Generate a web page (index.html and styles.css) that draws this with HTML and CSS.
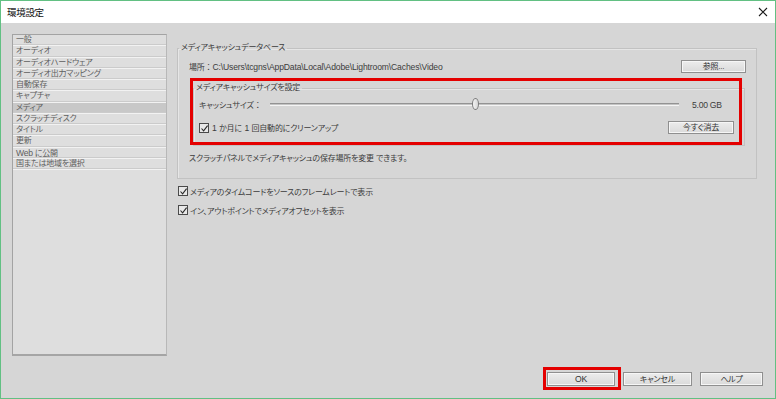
FILE: index.html
```html
<!DOCTYPE html>
<html lang="ja">
<head>
<meta charset="utf-8">
<title>環境設定</title>
<link rel="stylesheet" href="styles.css">
</head>
<body>
<div class="window">
  <div class="titlebar">
    <span class="title">環境設定</span>
    <svg class="close" width="10" height="10" viewBox="0 0 10 10"><path d="M1 1 L9 9 M9 1 L1 9" stroke="#1a1a1a" stroke-width="1.1" fill="none"/></svg>
  </div>
  <div class="body">
    <div class="main">
      <ul class="nav">
        <li>一般</li>
        <li>オーディオ</li>
        <li>オーディオハードウェア</li>
        <li>オーディオ出力マッピング</li>
        <li>自動保存</li>
        <li>キャプチャ</li>
        <li class="selected">メディア</li>
        <li>スクラッチディスク</li>
        <li>タイトル</li>
        <li>更新</li>
        <li><span class="latin">Web</span> に公開</li>
        <li>国または地域を選択</li>
      </ul>
      <div class="panel">
        <fieldset class="group outer">
          <legend>メディアキャッシュデータベース</legend>
          <div class="path-row">
            <span>場所 ： <span class="latin path">C:\Users\tcgns\AppData\Local\Adobe\Lightroom\Caches\Video</span></span>
            <button class="btn btn-browse">参照...</button>
          </div>
          <fieldset class="group inner">
            <legend>メディアキャッシュサイズを設定</legend>
            <div class="slider-row">
              <span class="slider-label">キャッシュサイズ ：</span>
              <div class="track"><span class="thumb" style="left: 50.2%"></span></div>
              <span class="slider-value latin">5.00 GB</span>
            </div>
            <div class="check-row">
              <label class="check spaced"><span class="box"><svg width="9" height="9" viewBox="0 0 9 9"><path d="M1.5 4.5 L3.6 6.8 L7.6 1.6" stroke="#2a2a2a" stroke-width="1.1" fill="none"/></svg></span><span class="latin">1</span> か月に <span class="latin">1</span> 回自動的にクリーンアップ</label>
              <button class="btn btn-clear">今すぐ消去</button>
            </div>
          </fieldset>
          <p class="note">スクラッチパネルでメディアキャッシュの保存場所を変更 できます。</p>
        </fieldset>
        <label class="check opt first"><span class="box"><svg width="9" height="9" viewBox="0 0 9 9"><path d="M1.5 4.5 L3.6 6.8 L7.6 1.6" stroke="#2a2a2a" stroke-width="1.1" fill="none"/></svg></span>メディアのタイムコードをソースのフレームレートで表示</label>
        <label class="check opt"><span class="box"><svg width="9" height="9" viewBox="0 0 9 9"><path d="M1.5 4.5 L3.6 6.8 L7.6 1.6" stroke="#2a2a2a" stroke-width="1.1" fill="none"/></svg></span>イン、アウトポイントでメディアオフセットを表示</label>
      </div>
    </div>
    <div class="footer">
      <button class="btn btn-ok"><span class="latin">OK</span></button>
      <button class="btn btn-cancel">キャンセル</button>
      <button class="btn btn-help">ヘルプ</button>
    </div>
  </div>
  <div class="mark mark-cache"></div>
  <div class="mark mark-ok"></div>
</div>
</body>
</html>
```

FILE: styles.css
```css
* { box-sizing: border-box; }
html, body { margin: 0; padding: 0; background: #d6d6d6; }
body {
  font-family: "Liberation Sans", "Noto Sans CJK JP", sans-serif;
  font-size: 8px;
  letter-spacing: -0.2px;
  font-feature-settings: "palt";
  color: #3c3c3c;
}
.latin { font-size: 8.6px; letter-spacing: -0.25px; }
.window {
  position: relative;
  width: 776px;
  height: 399px;
  border: 1px solid #62c083;
  background: #d6d6d6;
  overflow: hidden;
}
.titlebar {
  height: 22px;
  background: #fff;
  display: flex;
  align-items: center;
  justify-content: space-between;
  padding: 0 7px 0 6px;
}
.title { font-size: 9.5px; color: #111; letter-spacing: -0.3px; }
.close { display: block; margin-top: -1px; }
.body { padding: 11px 0 0 11px; }
.main { display: flex; gap: 10px; margin-right: 18px; }
.nav {
  list-style: none;
  margin: 0;
  padding: 0;
  width: 155px;
  height: 322px;
  background: #dedede;
  border: 1px solid #a3a3a3;
  border-right-color: #b8b8b8;
  border-bottom: 2px solid #a5a5a5;
}
.nav li {
  height: 11.25px;
  line-height: 10.5px;
  padding-left: 3px;
  color: #5e5e5e;
  border-bottom: 1px solid #f2f2f2;
  box-shadow: inset 0 -1px 0 #cbcbcb;
  white-space: nowrap;
}
.nav li.selected { background: #c8c8c8; }
.panel { flex: 1; display: flex; flex-direction: column; align-items: flex-start; }
.group {
  margin: 0;
  border: 1px solid #c2c2c2;
  box-shadow: inset 1px 1px 0 #e6e6e6;
  min-width: 0;
}
.group legend {
  line-height: 12px;
  padding: 0 2px;
}
.outer {
  width: 100%;
  margin-top: 8px;
  padding: 6px 10px 13px 11px;
}
.outer > legend { margin-left: -10px; }
.path-row {
  display: flex;
  align-items: center;
  justify-content: space-between;
  height: 13px;
}
.path { letter-spacing: -0.15px; }
.btn {
  font-family: inherit;
  font-size: 8px;
  letter-spacing: -0.2px;
  font-feature-settings: "palt";
  color: #333;
  height: 13px;
  padding: 0;
  line-height: 11px;
  background: linear-gradient(#ececec, #dadada);
  border: 1px solid #8f8f8f;
  box-shadow: inset 0 0 0 1px #f6f6f6;
  border-radius: 0;
}
.btn-browse { width: 65px; }
.inner {
  margin: 9px 1px 0 4px;
  padding: 4px 10px 11px 5px;
}
.inner > legend { margin-left: -5px; }
.slider-row {
  display: flex;
  align-items: center;
  height: 13px;
}
.slider-label { width: 71px; flex: none; white-space: nowrap; }
.track {
  position: relative;
  width: 409px;
  height: 3px;
  flex: none;
  background: #c4c4c4;
  border-top: 1px solid #939393;
  border-bottom: 1px solid #f4f4f4;
}
.thumb {
  position: absolute;
  top: -6px;
  width: 7px;
  height: 12px;
  margin-left: -3px;
  border: 1px solid #7a7a7a;
  border-radius: 50%;
  background: linear-gradient(90deg, #f4f4f4, #d6d6d6);
}
.slider-value { margin-left: 13px; }
.check-row {
  display: flex;
  align-items: center;
  justify-content: space-between;
  height: 13px;
  margin-top: 10px;
}
.btn-clear { width: 66px; }
.check { display: flex; align-items: center; white-space: pre; }
.spaced { word-spacing: 0.5px; }
.spaced .box { margin-right: 3px; }
.box {
  display: inline-block;
  width: 10px;
  height: 10px;
  border: 1px solid #4a4a4a;
  background: #e8e8e8;
  margin-right: 2px;
  position: relative;
}
.box svg { position: absolute; left: 0; top: 0; }
.note { margin: 7px 0 0; line-height: 12px; }
.opt { margin-left: 1px; height: 12px; margin-top: 7px; }
.opt.first { margin-top: 6px; }
.footer {
  display: flex;
  justify-content: flex-end;
  gap: 8px;
  margin-top: 16px;
  padding-right: 12px;
}
.btn-ok { width: 68px; height: 14px; }
.btn-cancel { width: 69px; height: 14px; }
.btn-help { width: 63px; height: 14px; }
.mark {
  position: absolute;
  border: 3px solid #e40000;
}
.mark-cache { left: 189px; top: 77px; width: 552px; height: 67px; }
.mark-ok { left: 542px; top: 366px; width: 78px; height: 23px; }
```
